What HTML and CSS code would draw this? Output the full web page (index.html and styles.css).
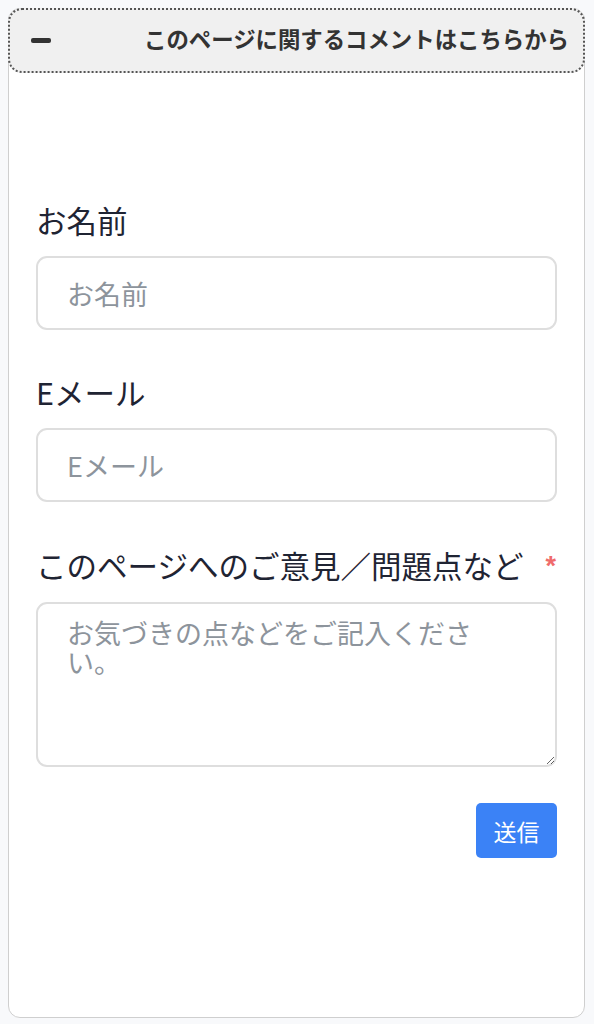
FILE: index.html
```html
<!DOCTYPE html>
<html lang="ja">
<head>
<meta charset="utf-8">
<title>コメント</title>
<link rel="stylesheet" href="styles.css">
</head>
<body>
<div class="panel">
  <div class="summary">
    <span class="minus"></span>
    <span class="summary-text">このページに関するコメントはこちらから</span>
  </div>
  <form class="form">
    <div class="field">
      <label class="label" for="name">お名前</label>
      <input class="input" id="name" type="text" placeholder="お名前">
    </div>
    <div class="field">
      <label class="label" for="email">Eメール</label>
      <input class="input" id="email" type="email" placeholder="Eメール">
    </div>
    <div class="field">
      <label class="label" for="msg">このページへのご意見／問題点など<span class="req">*</span></label>
      <textarea class="textarea" id="msg" placeholder="お気づきの点などをご記入ください。"></textarea>
    </div>
    <div class="actions">
      <button class="submit" type="button">送信</button>
    </div>
  </form>
</div>
</body>
</html>
```

FILE: styles.css
```css
html, body {
  margin: 0;
  padding: 0;
}
body {
  background: #f8f9fb;
  font-family: "Noto Sans CJK JP", "Noto Sans", sans-serif;
  padding: 8px 9px 4px 8px;
}
.panel {
  background: #ffffff;
  border: 1px solid #cfcfcf;
  border-radius: 12px;
  height: 1010px;
  box-sizing: border-box;
  position: relative;
}
.summary {
  margin: -1px -1px 0 -1px;
  height: 65px;
  box-sizing: border-box;
  background: #f0f0f0;
  border: 2px dotted #555;
  border-radius: 14px;
  display: flex;
  align-items: center;
  justify-content: space-between;
  padding: 0 14px 5px 21px;
}
.minus {
  display: block;
  width: 20px;
  height: 5px;
  border-radius: 2px;
  background: #333333;
  margin-top: 4px;
}
.summary-text {
  font-size: 22.4px;
  font-weight: 700;
  color: #333333;
}
.form {
  padding: 125px 27px 0 27px;
}
.field {
  display: flex;
  flex-direction: column;
  margin-bottom: 40px;
}
.field:last-of-type {
  margin-bottom: 37px;
}
.label {
  font-size: 30.5px;
  line-height: 45px;
  color: #1f2433;
  margin-bottom: 13px;
  display: flex;
  align-items: center;
}
.req {
  color: #ef6b6b;
  font-family: "Liberation Sans", sans-serif;
  font-weight: 700;
  font-size: 27px;
  margin-left: auto;
  margin-right: 1px;
  margin-top: 2px;
}
.input, .textarea {
  font-family: "Noto Sans CJK JP", "Noto Sans", sans-serif;
  font-size: 27px;
  color: #1f2433;
  width: 100%;
  box-sizing: border-box;
  border: 2px solid #dedede;
  border-radius: 11px;
  background: #fff;
  padding: 0 30px 0 29px;
  outline: none;
}
.input {
  height: 74px;
}
.textarea {
  height: 165px;
  padding-top: 14px;
  line-height: 29px;
  display: block;
  margin-bottom: -4px;
}
.input::placeholder, .textarea::placeholder {
  color: #8d949c;
}
.actions {
  display: flex;
  justify-content: flex-end;
}
.submit {
  font-family: "Noto Sans CJK JP", "Noto Sans", sans-serif;
  font-size: 23px;
  color: #ffffff;
  background: #3b82f6;
  border: none;
  border-radius: 5px;
  width: 81px;
  height: 55px;
  padding: 0;
}
```
